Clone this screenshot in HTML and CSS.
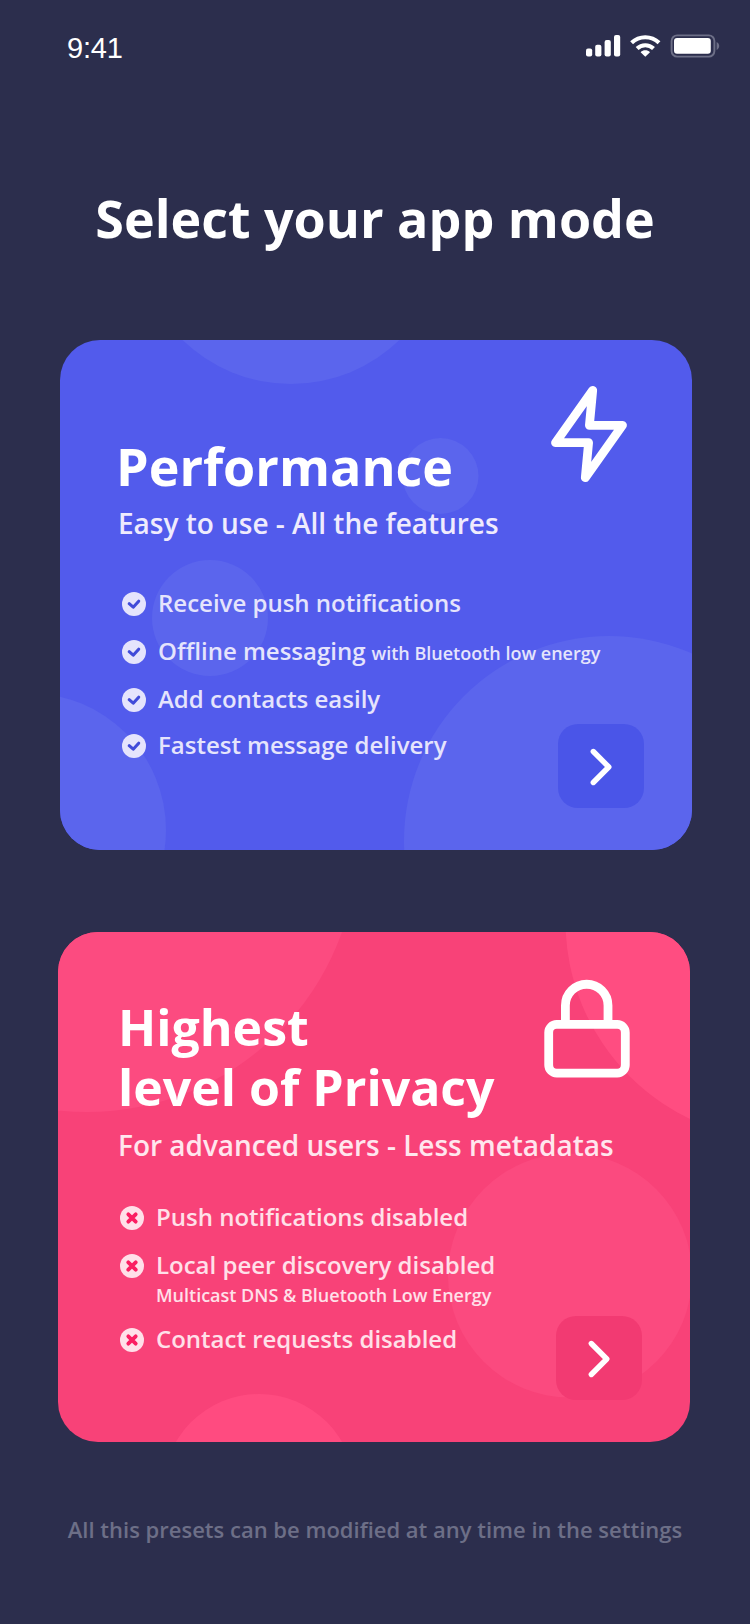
FILE: index.html
```html
<!DOCTYPE html>
<html lang="en">
<head>
<meta charset="utf-8">
<title>Select your app mode</title>
<link rel="stylesheet" href="styles.css">
</head>
<body>
<svg class="defs" width="0" height="0" aria-hidden="true">
  <symbol id="check" viewBox="0 0 24 24"><circle cx="12" cy="12" r="12" fill="currentColor"/><path d="M7.2 11.700l4 3.500 5.500-6" fill="none" stroke="#414bd9" stroke-width="3.100" stroke-linecap="round" stroke-linejoin="round"/></symbol>
  <symbol id="cross" viewBox="0 0 24 24"><circle cx="12" cy="12" r="12" fill="currentColor"/><path d="M8.300 8.300l7.400 7.400M15.700 8.300l-7.400 7.400" fill="none" stroke="#fb1e62" stroke-width="3.800" stroke-linecap="round"/></symbol>
  <symbol id="chevron" viewBox="0 0 24 40"><path d="M4.3 4.5L19.8 20 4.3 35.5" fill="none" stroke="#fff" stroke-width="5.4" stroke-linecap="round" stroke-linejoin="round"/></symbol>
</svg>
<div class="screen">
  <header class="status">
    <span class="time">9:41</span>
    <svg class="indicators" width="136" height="26" viewBox="584 33 136 26">
      <g fill="#fff">
        <rect x="586" y="48.4" width="6.2" height="8.2" rx="2"/>
        <rect x="595.2" y="44.8" width="6.2" height="11.8" rx="2"/>
        <rect x="604.6" y="40" width="6.2" height="16.6" rx="2"/>
        <rect x="614" y="35" width="6.2" height="21.6" rx="2"/>
        <path d="M645.3 56.8l-4.7-4.6c2.6-2.5 6.8-2.5 9.4 0z"/>
        <rect x="674" y="38.1" width="36.8" height="15.6" rx="3"/>
      </g>
      <path d="M631.6 42.7a19.8 19.8 0 0 1 27.4 0M637.1 48.5a11.8 11.8 0 0 1 16.4 0" fill="none" stroke="#fff" stroke-width="4.1"/>
      <rect x="671.6" y="35.4" width="42.8" height="21.2" rx="5.6" fill="none" stroke="#6d6f87" stroke-width="1.9"/>
      <path d="M716.6 42v8c1.6-.7 2.6-2.300 2.600-4s-1-3.300-2.600-4z" fill="#6d6f87"/>
    </svg>
  </header>
  <h1 class="title">Select your app mode</h1>

  <section class="card performance">
    <svg class="bubbles" width="632" height="510" viewBox="60 340 632 510" fill="#5b65ed">
      <circle cx="291" cy="228.300" r="155.700"/><circle cx="440.500" cy="476" r="38"/><circle cx="210" cy="618" r="58"/><circle cx="29.200" cy="830" r="136.800"/><circle cx="609" cy="841" r="205"/>
    </svg>
    <svg class="emblem" width="90" height="110" viewBox="545 380 90 110"><path d="M592.700 390.300L555.500 442.700H588.600L585.300 477.700 622.500 425.300H589.400z" fill="none" stroke="#fff" stroke-width="8.800" stroke-linejoin="round"/></svg>
    <h2 class="name">Performance</h2>
    <p class="tagline">Easy to use - All the features</p>
    <ul class="features">
      <li><svg class="mark"><use href="#check"/></svg><span>Receive push notifications</span></li>
      <li><svg class="mark"><use href="#check"/></svg><span>Offline messaging</span><small class="inline-note">with Bluetooth low energy</small></li>
      <li><svg class="mark"><use href="#check"/></svg><span>Add contacts easily</span></li>
      <li><svg class="mark"><use href="#check"/></svg><span>Fastest message delivery</span></li>
    </ul>
    <button class="go" aria-label="Choose Performance"><svg width="24" height="40"><use href="#chevron"/></svg></button>
  </section>

  <section class="card privacy">
    <svg class="bubbles" width="632" height="510" viewBox="58 932 632 510">
      <circle cx="87" cy="841.400" r="270.600" fill="#fc4b80"/><circle cx="784.400" cy="921.400" r="218.900" fill="#ff4d81"/><circle cx="570" cy="1275.500" r="122" fill="#fb4a7f"/><circle cx="259" cy="1490" r="96" fill="#ff4b80"/>
    </svg>
    <svg class="emblem" width="90" height="110" viewBox="542 975 90 110"><g fill="none" stroke="#fff" stroke-width="8.800"><rect x="548.700" y="1024.400" width="76.600" height="48.700" rx="8"/><path d="M565.400 1022v-16.500a21.300 21.300 0 0 1 42.600 0V1022"/></g></svg>
    <h2 class="name"><span>Highest</span><span>level of Privacy</span></h2>
    <p class="tagline">For advanced users - Less metadatas</p>
    <ul class="features">
      <li><svg class="mark"><use href="#cross"/></svg><span>Push notifications disabled</span></li>
      <li><svg class="mark"><use href="#cross"/></svg><span>Local peer discovery disabled</span><small class="note">Multicast DNS &amp; Bluetooth Low Energy</small></li>
      <li><svg class="mark"><use href="#cross"/></svg><span>Contact requests disabled</span></li>
    </ul>
    <button class="go" aria-label="Choose Highest level of Privacy"><svg width="24" height="40"><use href="#chevron"/></svg></button>
  </section>
  <p class="footnote">All this presets can be modified at any time in the settings</p>
</div>
</body>
</html>
```
FILE: styles.css
```css
* { box-sizing: border-box; margin: 0; padding: 0; }
body { background: #2c2e4d; }
.defs { position: absolute; }
.screen {
  width: 750px;
  height: 1624px;
  overflow: hidden;
  background: #2c2e4d;
  color: #fff;
  font-family: "Open Sans", "Noto Sans", sans-serif;
  font-weight: 600;
  white-space: nowrap;
}
.status { display: flex; justify-content: space-between; height: 182px; padding: 33px 30px 0 67px; }
.time { font: 400 29px/30px "Liberation Sans", Arial, sans-serif; letter-spacing: -0.2px; }
.title { height: 158px; font: 700 52px/71px "Open Sans", sans-serif; text-align: center; }
.card {
  position: relative;
  width: 632px;
  height: 510px;
  overflow: hidden;
  border-radius: 40px;
}
.performance { margin-left: 60px; padding: 90px 0 0 58px; background: #525bec; }
.privacy { margin: 82px 0 0 58px; padding: 65px 0 0 60px; background: #f84278; }
.bubbles { position: absolute; top: 0; left: 0; }
.emblem { position: absolute; }
.performance .emblem { left: 485px; top: 40px; }
.privacy .emblem { left: 484px; top: 43px; }
.name { position: relative; font: 700 52px/71px "Open Sans", sans-serif; }
.performance .name { margin: 0 0 2px -2px; }
.privacy .name { display: grid; margin-bottom: 8px; font-size: 50px; line-height: 60px; }
.tagline { position: relative; font-size: 28px; line-height: 40px; letter-spacing: -0.02px; color: #efebfd; }
.privacy .tagline { color: #ffe6ee; }
.features { position: relative; list-style: none; font-size: 24px; line-height: 24px; color: #e5e4fc; }
.features li { display: grid; grid-template-columns: 24px auto 1fr; column-gap: 12px; height: 48px; }
.features li > span, .features small { margin-top: -1px; }
.mark { width: 24px; height: 24px; }
.performance .features { padding: 49px 0 0 4px; }
.performance .features li:nth-child(3) { height: 46px; }
.privacy .features { padding: 41px 0 0 2px; color: #ffe0e9; }
.privacy .features li:nth-child(2) { height: 74px; grid-template-rows: 24px 24px; }
.features small { font-size: 18px; }
.inline-note { margin-left: -6px; padding-top: 2px; }
.features .note { grid-column: 2 / 4; margin-top: 5px; }
.go {
  position: absolute;
  right: 48px;
  bottom: 42px;
  display: flex;
  align-items: center;
  justify-content: center;
  width: 86px;
  height: 84px;
  border: 0;
  border-radius: 20px;
  background: #4a55e8;
}
.go svg { margin-top: 2px; }
.privacy .go { background: #f23a72; }
.footnote { margin-top: 72px; font-size: 22px; line-height: 30px; text-align: center; color: #6d6f87; }
```
